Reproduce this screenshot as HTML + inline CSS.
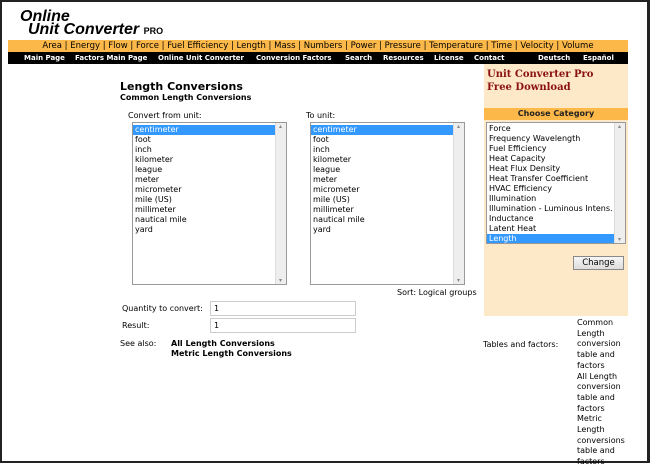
<!DOCTYPE html>
<html><head><meta charset="utf-8"><style>
*{margin:0;padding:0;box-sizing:border-box}
body{width:650px;height:463px;overflow:hidden;background:#fff;font-family:"DejaVu Sans","Liberation Sans",sans-serif;font-size:8px;color:#000;position:relative}
.frame{position:absolute;left:0;top:0;width:650px;height:463px;border:2px solid #222;border-right-width:3px}
.a{position:absolute;white-space:nowrap}
.lb{position:absolute;border:1px solid #999;background:#fff;overflow:hidden}
.lb .it{height:10px;line-height:10px;padding-left:2px;font-size:8px}
.lb .sel{background:#3399ff;color:#fff}
.sb{position:absolute;right:0;top:0;bottom:0;width:11px;background:#eee;border-left:1px solid #ddd}
.sb:before{content:"▴";position:absolute;top:0;left:3px;font-size:6px;color:#888}
.sb:after{content:"▾";position:absolute;bottom:0;left:3px;font-size:6px;color:#888}
.inp{position:absolute;border:1px solid #ccc;height:15px;padding-left:3px;line-height:13px;font-size:8px}
.nav span{position:absolute;top:0}
</style></head><body>
<div class="frame"></div>
<div class="a" style="left:20px;top:8px;font:italic bold 16px 'Liberation Sans',sans-serif">Online</div>
<div class="a" style="left:28px;top:21px;font:italic bold 16px 'Liberation Sans',sans-serif">Unit Converter <span style="font-size:9px;font-style:normal">PRO</span></div>
<div class="a" style="left:8px;top:40px;width:620px;height:12px;background:#fcb94a;text-align:center;line-height:12px;font-size:8.5px">Area | Energy | Flow | Force | Fuel Efficiency | Length | Mass | Numbers | Power | Pressure | Temperature | Time | Velocity | Volume</div>
<div class="a nav" style="left:8px;top:52px;width:620px;height:12px;background:#000;color:#fff;font-weight:bold;line-height:12px;font-size:7px">
<span style="left:16px">Main Page</span><span style="left:67px">Factors Main Page</span><span style="left:150px">Online Unit Converter</span><span style="left:248px">Conversion Factors</span><span style="left:337px">Search</span><span style="left:375px">Resources</span><span style="left:426px">License</span><span style="left:466px">Contact</span><span style="left:530px">Deutsch</span><span style="left:575px">Español</span></div>

<div class="a" style="left:484px;top:64px;width:144px;height:252px;background:#fde9c8"></div>
<div class="a" style="left:487px;top:68px;color:#8b1010;font:bold 10px 'DejaVu Serif','Liberation Serif',serif;line-height:13px">Unit Converter Pro<br>Free Download</div>
<div class="a" style="left:484px;top:108px;width:144px;height:12px;background:#fcb94a;text-align:center;font-weight:bold;line-height:12px;font-size:8px;color:#222">Choose Category</div>
<div class="lb" style="left:486px;top:122px;width:140px;height:122px;padding-top:1px">
<div class="it">Force</div><div class="it">Frequency Wavelength</div><div class="it">Fuel Efficiency</div><div class="it">Heat Capacity</div><div class="it">Heat Flux Density</div><div class="it">Heat Transfer Coefficient</div><div class="it">HVAC Efficiency</div><div class="it">Illumination</div><div class="it">Illumination - Luminous Intens.</div><div class="it">Inductance</div><div class="it">Latent Heat</div><div class="it sel" style="margin-right:11px">Length</div>
<div class="sb"></div></div>
<div class="a" style="left:573px;top:256px;width:51px;height:14px;border:1px solid #888;background:linear-gradient(#f6f6f6,#ddd);text-align:center;line-height:12px;font-size:8.5px">Change</div>

<div class="a" style="left:120px;top:80px;font-weight:bold;font-size:11px">Length Conversions</div>
<div class="a" style="left:120px;top:93px;font-weight:bold;font-size:8px">Common Length Conversions</div>
<div class="a" style="left:128px;top:111px">Convert from unit:</div>
<div class="a" style="left:306px;top:111px">To unit:</div>
<div class="lb" style="left:132px;top:122px;width:155px;height:163px;padding-top:2px">
<div class="it sel" style="margin-right:11px">centimeter</div><div class="it">foot</div><div class="it">inch</div><div class="it">kilometer</div><div class="it">league</div><div class="it">meter</div><div class="it">micrometer</div><div class="it">mile (US)</div><div class="it">millimeter</div><div class="it">nautical mile</div><div class="it">yard</div><div class="sb"></div></div>
<div class="lb" style="left:310px;top:122px;width:155px;height:163px;padding-top:2px">
<div class="it sel" style="margin-right:11px">centimeter</div><div class="it">foot</div><div class="it">inch</div><div class="it">kilometer</div><div class="it">league</div><div class="it">meter</div><div class="it">micrometer</div><div class="it">mile (US)</div><div class="it">millimeter</div><div class="it">nautical mile</div><div class="it">yard</div><div class="sb"></div></div>
<div class="a" style="left:397px;top:288px">Sort: Logical groups</div>

<div class="a" style="left:122px;top:304px">Quantity to convert:</div>
<div class="inp" style="left:210px;top:301px;width:146px">1</div>
<div class="a" style="left:122px;top:321px">Result:</div>
<div class="inp" style="left:210px;top:318px;width:146px">1</div>
<div class="a" style="left:120px;top:339px">See also:</div>
<div class="a" style="left:171px;top:339px;font-weight:bold;line-height:10px">All Length Conversions<br>Metric Length Conversions</div>

<div class="a" style="left:483px;top:340px">Tables and factors:</div>
<div class="a" style="left:577px;top:318px;line-height:10.7px">Common<br>Length<br>conversion<br>table and<br>factors<br>All Length<br>conversion<br>table and<br>factors<br>Metric<br>Length<br>conversions<br>table and<br>factors</div>
</body></html>
